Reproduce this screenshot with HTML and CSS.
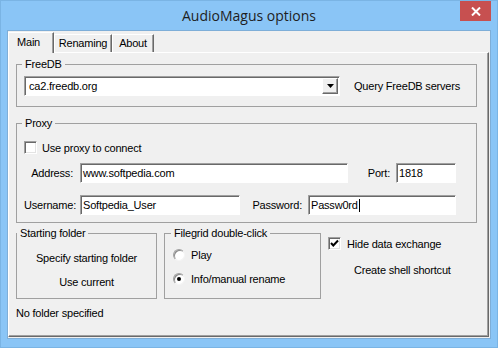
FILE: index.html
```html
<!DOCTYPE html>
<html lang="en">
<head>
  <meta charset="UTF-8" />
  <title>AudioMagus options</title>
  <link rel="stylesheet" href="styles.css">
</head>
<body>
  <div class="window">
    <div class="titlebar">
      <span></span>
      <div class="title">AudioMagus options</div>
      <div class="close">
        <svg width="10" height="9" viewBox="0 0 10 9"><path d="M1 0.5 L9 8.5 M9 0.5 L1 8.5" stroke="#fff" stroke-width="2" fill="none"/></svg>
      </div>
    </div>

    <div class="client">
      <div class="tabs">
        <div class="tab active">Main</div>
        <div class="tab renaming">Renaming</div>
        <div class="tab about">About</div>
      </div>

      <div class="page">
        <fieldset class="group freedb">
          <legend>FreeDB</legend>
          <div class="row">
            <div class="combo">
              <span class="combo-text">ca2.freedb.org</span>
              <span class="combo-btn">
                <svg width="7" height="4" viewBox="0 0 7 4"><polygon points="0,0 7,0 3.5,4" fill="#000"/></svg>
              </span>
            </div>
            <span class="query">Query FreeDB servers</span>
          </div>
        </fieldset>

        <fieldset class="group proxy">
          <legend>Proxy</legend>
          <div class="check-row">
            <span class="checkbox"></span>
            <span class="check-label">Use proxy to connect</span>
          </div>
          <div class="field-row first">
            <span class="field-label">Address:</span>
            <div class="field address">www.softpedia.com</div>
            <div class="pair">
              <span>Port:</span>
              <div class="field port">1818</div>
            </div>
          </div>
          <div class="field-row second">
            <span class="field-label">Username:</span>
            <div class="field username">Softpedia_User</div>
            <div class="pair">
              <span>Password:</span>
              <div class="field password">Passw0rd<span class="caret"></span></div>
            </div>
          </div>
        </fieldset>

        <div class="bottom-row">
          <fieldset class="group start">
            <legend>Starting folder</legend>
            <div class="flat-btn">Specify starting folder</div>
            <div class="flat-btn">Use current</div>
          </fieldset>

          <fieldset class="group grid">
            <legend>Filegrid double-click</legend>
            <div class="radio-row">
              <span class="radio"></span>
              <span>Play</span>
            </div>
            <div class="radio-row">
              <span class="radio checked"></span>
              <span>Info/manual rename</span>
            </div>
          </fieldset>

          <div class="side">
            <div class="check-row">
              <span class="checkbox">
                <svg width="11" height="11" viewBox="0 0 11 11"><polyline points="2,5 4.3,7.5 9,2.5" stroke="#000" stroke-width="2" fill="none"/></svg>
              </span>
              <span class="check-label">Hide data exchange</span>
            </div>
            <div class="flat-btn shell">Create shell shortcut</div>
          </div>
        </div>

        <div class="status">No folder specified</div>
      </div>
    </div>
  </div>
</body>
</html>
```

FILE: styles.css
```css
* {
  box-sizing: border-box;
}

body {
  margin: 0;
  width: 498px;
  height: 348px;
  overflow: hidden;
  background: #8ac5f6;
  font-family: "Liberation Sans", Arial, sans-serif;
  font-size: 11px;
  letter-spacing: -0.2px;
  color: #000;
}

.window {
  width: 498px;
  height: 348px;
  border: 1px solid #7ab4e4;
  display: flex;
  flex-direction: column;
}

/* title bar */

.titlebar {
  height: 29px;
  display: grid;
  grid-template-columns: 1fr auto 1fr;
  align-items: start;
}

.title {
  font-family: "Open Sans", "Liberation Sans", sans-serif;
  font-size: 14px;
  letter-spacing: 0;
  line-height: 29px;
  color: #1e1e1e;
}

.close {
  justify-self: end;
  margin-right: 6px;
  width: 31px;
  height: 20px;
  background: #c75050;
  display: flex;
  align-items: center;
  justify-content: center;
}

/* client area */

.client {
  margin: 0 6px;
  height: 309px;
  border: 1px solid #7eaed8;
  background: #f0f0f0;
}

.tabs {
  height: 21px;
  display: flex;
  align-items: flex-end;
}

.tab {
  height: 18px;
  line-height: 17px;
  text-align: center;
  border-top: 1px solid #fff;
  border-left: 1px solid #fff;
  border-right: 1px solid #696969;
  box-shadow: inset -1px 0 0 #a0a0a0;
  background: #f0f0f0;
}

.tab.active {
  width: 46px;
  height: 21px;
  margin-bottom: -1px;
  padding-left: 8px;
  text-align: left;
  line-height: 18px;
  position: relative;
  z-index: 1;
}

.tab.renaming {
  width: 58px;
}

.tab.about {
  width: 42px;
}

.page {
  width: 481px;
  height: 285px;
  padding: 5px 11px 0 7px;
  border-top: 1px solid #fff;
  border-left: 1px solid #fff;
  border-right: 1px solid #696969;
  border-bottom: 1px solid #696969;
  box-shadow: inset -1px -1px 0 #a0a0a0;
}

/* group boxes */

.group {
  margin: 0;
  min-width: 0;
  border: 1px solid #a0a0a0;
  padding: 0 7px;
}

.group legend {
  padding: 0 3px;
  margin-left: -2px;
  line-height: 13px;
}

.freedb {
  padding: 5px 8px 10px 7px;
}

.row {
  display: flex;
  align-items: center;
}

.combo {
  width: 316px;
  height: 20px;
  display: flex;
  align-items: center;
  justify-content: space-between;
  background: #fff;
  border: 1px solid;
  border-color: #a0a0a0 #fff #fff #a0a0a0;
  box-shadow: inset 1px 1px 0 #696969;
}

.combo-text {
  padding-left: 4px;
}

.combo-btn {
  width: 16px;
  height: 16px;
  margin-right: 1px;
  margin-top: -1px;
  display: flex;
  align-items: center;
  justify-content: center;
  background: #f0f0f0;
  border: 1px solid;
  border-color: #fff #696969 #696969 #fff;
  box-shadow: inset -1px -1px 0 #a0a0a0;
}

.query {
  margin-left: 14px;
}

.proxy {
  margin-top: 10px;
  padding: 0 20px 7px 7px;
}

.check-row {
  height: 13px;
  display: flex;
  align-items: center;
}

.proxy .check-row {
  margin-top: 11px;
}

.checkbox {
  width: 13px;
  height: 13px;
  flex: none;
  display: flex;
  align-items: center;
  justify-content: center;
  background: #fff;
  border: 1px solid;
  border-color: #a0a0a0 #fff #fff #a0a0a0;
  box-shadow: inset 1px 1px 0 #696969, inset -1px -1px 0 #e3e3e3;
}

.check-label {
  margin-left: 5px;
}

.field-row {
  height: 20px;
  display: flex;
  align-items: center;
}

.field-row.first {
  margin-top: 9px;
}

.field-row.second {
  margin-top: 12px;
}

.field-label {
  width: 49px;
  text-align: right;
}

.field {
  height: 20px;
  line-height: 18px;
  padding-left: 2px;
  margin-left: 7px;
  background: #fff;
  border: 1px solid;
  border-color: #a0a0a0 #fff #fff #a0a0a0;
  box-shadow: inset 1px 1px 0 #696969;
  display: flex;
  align-items: center;
}

.address {
  width: 268px;
}

.username {
  width: 160px;
}

.pair {
  margin-left: auto;
  display: flex;
  align-items: center;
}

.pair .field {
  margin-left: 6px;
}

.port {
  width: 60px;
}

.password {
  width: 148px;
}

.caret {
  width: 1px;
  height: 13px;
  margin-left: 1px;
  background: #000;
}

/* bottom section */

.bottom-row {
  margin-top: 4px;
  display: flex;
}

.start {
  width: 141px;
  padding: 7px 2px 5px;
}

.flat-btn {
  height: 22px;
  line-height: 22px;
  text-align: center;
}

.start .flat-btn + .flat-btn {
  margin-top: 2px;
}

.grid {
  width: 157px;
  margin-left: 7px;
  padding: 7px 8px 5px 8px;
}

.radio-row {
  height: 16px;
  display: flex;
  align-items: center;
}

.radio-row + .radio-row {
  margin-top: 8px;
}

.radio {
  width: 12px;
  height: 12px;
  flex: none;
  margin-right: 6px;
  border-radius: 50%;
  background: #fff;
  border: 1px solid;
  border-color: #a0a0a0 #f4f4f4 #f4f4f4 #a0a0a0;
  box-shadow: inset 1px 1px 0 #8a8a8a;
  display: flex;
  align-items: center;
  justify-content: center;
}

.radio.checked::after {
  content: "";
  width: 4px;
  height: 4px;
  border-radius: 50%;
  background: #000;
}

.side {
  margin-left: 7px;
  padding-top: 10px;
}

.side .check-label {
  margin-left: 6px;
}

.shell {
  margin-top: 9px;
  padding-left: 26px;
  text-align: left;
}

.status {
  margin-top: 8px;
  line-height: 13px;
}
```
